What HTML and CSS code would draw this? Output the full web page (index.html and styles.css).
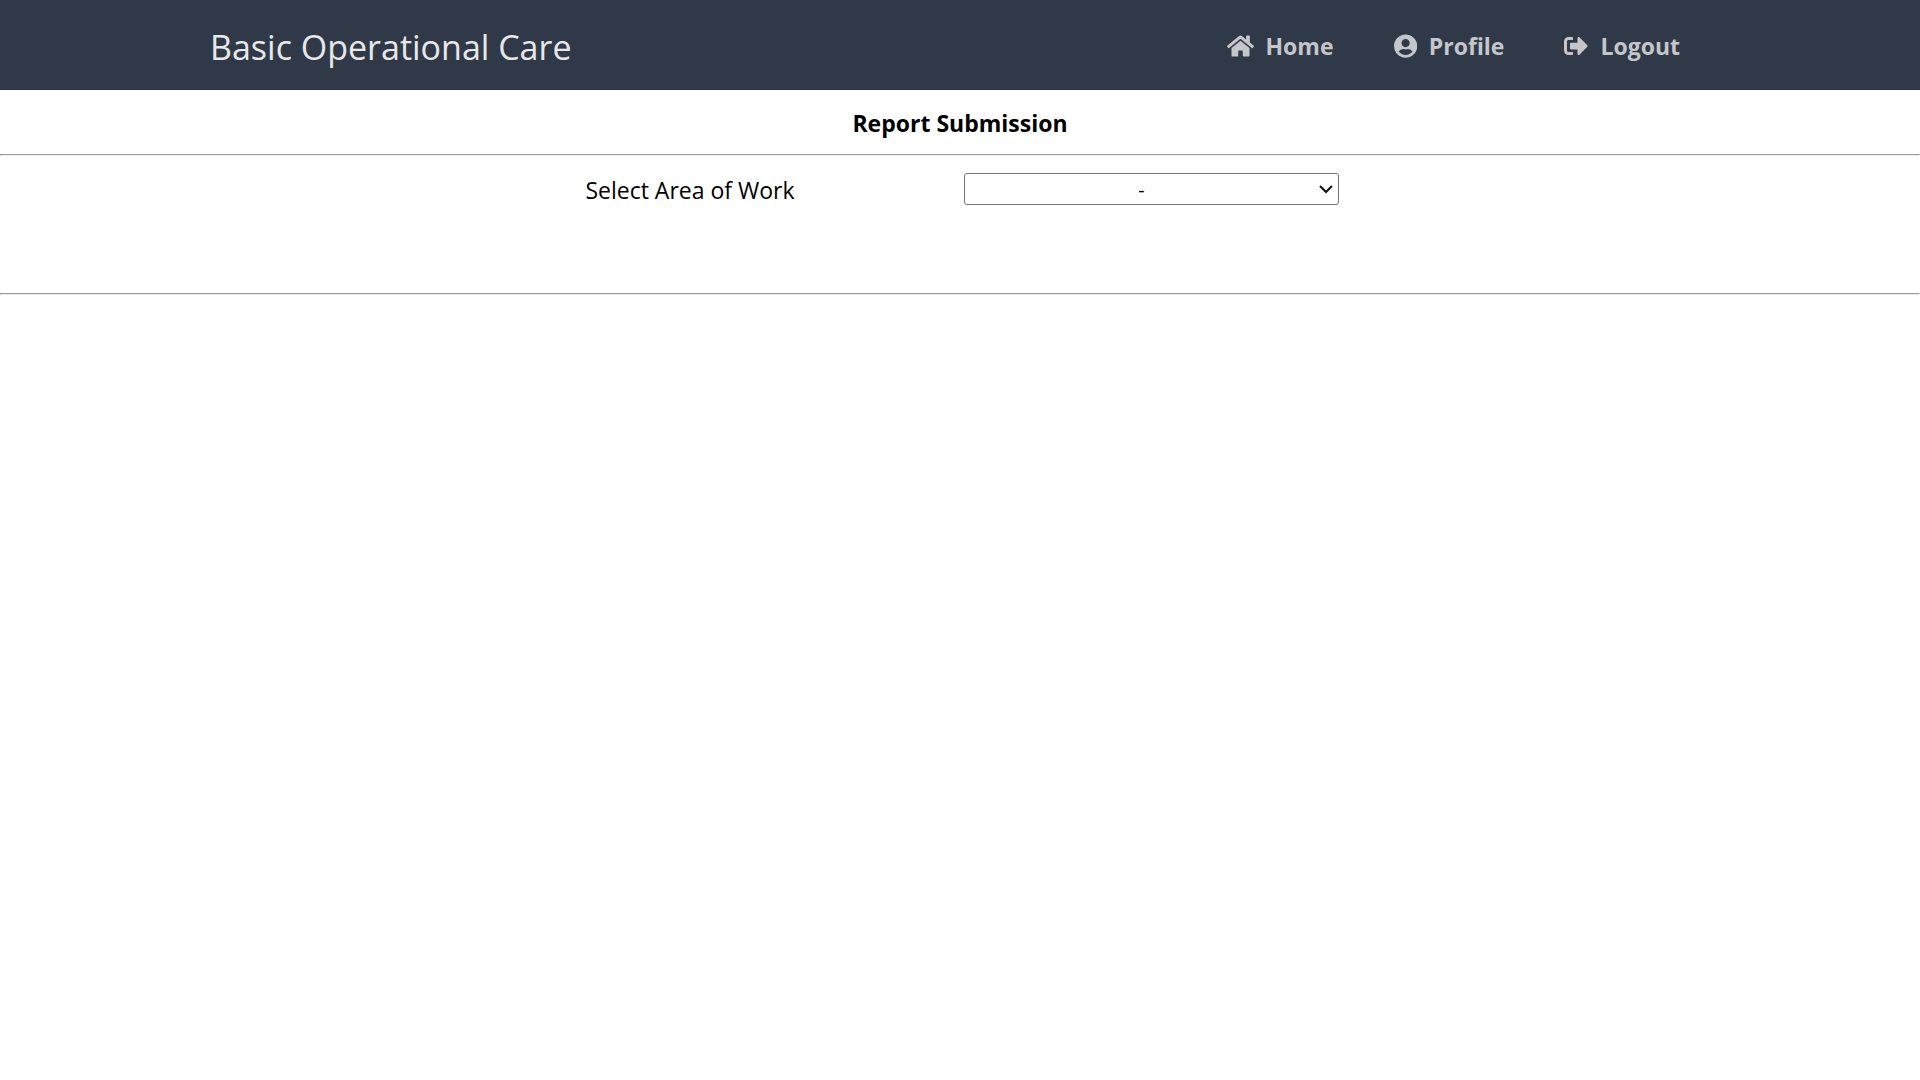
FILE: index.html
```html
<!DOCTYPE html>
<html lang="en">
<head>
<meta charset="utf-8">
<meta name="viewport" content="width=device-width, initial-scale=1">
<title>Basic Operational Care</title>
<link rel="stylesheet" href="styles.css">
</head>
<body>
<header class="header">
  <div class="header-inner">
    <a class="brand" href="#">Basic Operational Care</a>
    <nav class="nav">
      <a class="nav-link" href="#"><svg class="icon" viewBox="0 0 576 512" aria-hidden="true"><path d="M280.37 148.26L96 300.11V464a16 16 0 0 0 16 16l112.06-.29a16 16 0 0 0 15.92-16V368a16 16 0 0 1 16-16h64a16 16 0 0 1 16 16v95.64a16 16 0 0 0 16 16.05L464 480a16 16 0 0 0 16-16V300L295.67 148.26a12.19 12.19 0 0 0-15.3 0zM571.6 251.47L488 182.56V44.05a12 12 0 0 0-12-12h-56a12 12 0 0 0-12 12v72.61L318.47 43a48 48 0 0 0-61 0L4.34 251.47a12 12 0 0 0-1.6 16.9l25.5 31A12 12 0 0 0 45.15 301l235.22-193.74a12.19 12.19 0 0 1 15.3 0L530.9 301a12 12 0 0 0 16.9-1.6l25.5-31a12 12 0 0 0-1.7-16.93z"/></svg>Home</a>
      <a class="nav-link" href="#"><svg class="icon" viewBox="0 0 496 512" aria-hidden="true"><path d="M248 8C111 8 0 119 0 256s111 248 248 248 248-111 248-248S385 8 248 8zm0 96c48.6 0 88 39.4 88 88s-39.4 88-88 88-88-39.4-88-88 39.4-88 88-88zm0 344c-58.7 0-111.3-26.6-146.5-68.2 18.8-35.4 55.6-59.8 98.5-59.8 2.4 0 4.8.4 7.1 1.1 13 4.2 26.6 6.9 40.9 6.9 14.3 0 28-2.7 40.9-6.9 2.3-.7 4.7-1.1 7.1-1.1 42.9 0 79.7 24.4 98.5 59.8C359.3 421.4 306.7 448 248 448z"/></svg>Profile</a>
      <a class="nav-link" href="#"><svg class="icon" viewBox="0 0 512 512" aria-hidden="true"><path d="M497 273L329 441c-15 15-41 4.5-41-17v-96H152c-13.3 0-24-10.7-24-24v-96c0-13.3 10.7-24 24-24h136V88c0-21.4 25.9-32 41-17l168 168c9.3 9.4 9.3 24.6 0 34zM192 436v-40c0-6.6-5.4-12-12-12H96c-17.7 0-32-14.3-32-32V160c0-17.7 14.3-32 32-32h84c6.6 0 12-5.4 12-12V76c0-6.6-5.4-12-12-12H96c-53 0-96 43-96 96v192c0 53 43 96 96 96h84c6.6 0 12-5.4 12-12z"/></svg>Logout</a>
    </nav>
  </div>
</header>
<main>
  <h1 class="title">Report Submission</h1>
  <hr class="rule">
  <form class="form">
    <label class="label" for="area">Select Area of Work</label>
    <select class="select" id="area" name="area"><option>-</option></select>
  </form>
  <hr class="rule">
</main>
</body>
</html>
```
FILE: styles.css
```css
* {
  box-sizing: border-box;
}

body {
  margin: 0;
  background: #fff;
  color: #000;
  font-family: "Segoe UI", "Open Sans", "Noto Sans", sans-serif;
  font-size: 23px;
  line-height: 32px;
}

.header {
  background: #303948;
  border-bottom: 1px solid #2d2f44;
}

.header-inner {
  display: flex;
  align-items: center;
  justify-content: space-between;
  max-width: 1500px;
  min-height: 89px;
  margin: 0 auto;
  padding-top: 4px;
}

.brand {
  color: #e8e8e8;
  font-size: 34px;
  line-height: 48px;
  text-decoration: none;
}

.nav {
  display: flex;
}

.nav-link {
  display: flex;
  align-items: center;
  gap: 12px;
  padding: 0 30px 2px;
  color: #c4c6ca;
  font-weight: 700;
  text-decoration: none;
}

.icon {
  height: 24px;
  fill: currentColor;
}

.title {
  margin: 0;
  padding: 17px 0 15px;
  font-size: 23px;
  font-weight: 700;
  text-align: center;
}

.rule {
  margin: 0;
  border: 1px solid;
  border-color: #9a9a9a #eee #eee #9a9a9a;
}

.form {
  display: grid;
  grid-template-columns: 1fr 1fr;
  align-items: start;
  max-width: 1080px;
  min-height: 137px;
  margin: 0 auto;
  padding-top: 17px;
}

.label {
  line-height: 34px;
  text-align: center;
}

.select {
  width: 375px;
  height: 32px;
  margin-left: 4px;
  padding: 0 20px 0 0;
  border: 1px solid #767676;
  border-radius: 3px;
  appearance: none;
  background: #fff url("data:image/svg+xml,%3Csvg xmlns='http://www.w3.org/2000/svg' width='14' height='10'%3E%3Cpath d='M1 2l6 6 6-6' fill='none' stroke='%23111' stroke-width='2'/%3E%3C/svg%3E") no-repeat right 5px center;
  color: #000;
  font: inherit;
  font-size: 20px;
  text-align: center;
}
```
